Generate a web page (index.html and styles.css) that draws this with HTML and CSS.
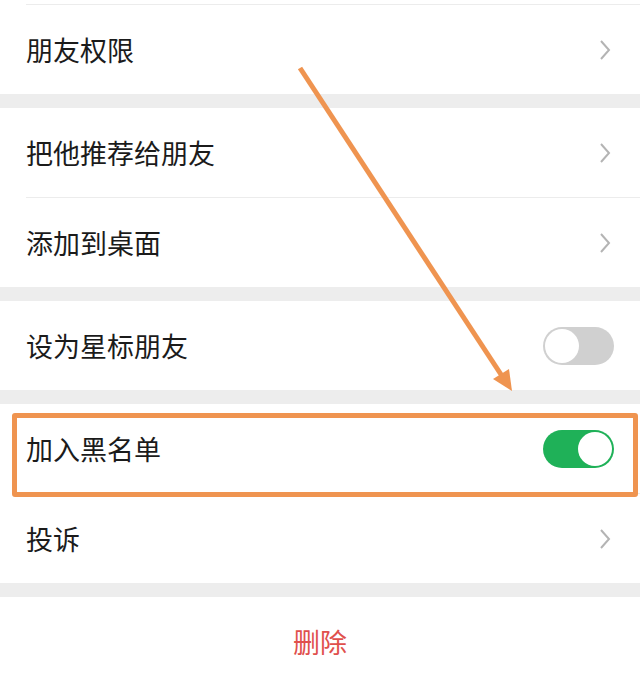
FILE: index.html
```html
<!DOCTYPE html>
<html>
<head>
	<meta charset="utf-8">
	<meta name="viewport" content="width=device-width, initial-scale=1">
	<title>资料设置</title>
	<link rel="stylesheet" href="styles.css">
</head>
<body>
<div class="page">
	<div class="group">
		<div class="stub"></div>
		<div class="cell">
			<span class="label">朋友权限</span>
			<svg class="arrow" width="12" height="22" viewBox="0 0 12 22"><path d="M2 2 L10 11 L2 20" fill="none" stroke="#b4b4b4" stroke-width="2"/></svg>
		</div>
	</div>

	<div class="group">
		<div class="cell">
			<span class="label">把他推荐给朋友</span>
			<svg class="arrow" width="12" height="22" viewBox="0 0 12 22"><path d="M2 2 L10 11 L2 20" fill="none" stroke="#b4b4b4" stroke-width="2"/></svg>
		</div>
		<div class="cell">
			<span class="label">添加到桌面</span>
			<svg class="arrow" width="12" height="22" viewBox="0 0 12 22"><path d="M2 2 L10 11 L2 20" fill="none" stroke="#b4b4b4" stroke-width="2"/></svg>
		</div>
	</div>

	<div class="group">
		<div class="cell">
			<span class="label">设为星标朋友</span>
			<span class="switch"></span>
		</div>
	</div>

	<div class="group">
		<div class="cell cell-marked">
			<span class="label">加入黑名单</span>
			<span class="switch switch-on"></span>
			<div class="mark"></div>
		</div>
		<div class="cell">
			<span class="label">投诉</span>
			<svg class="arrow" width="12" height="22" viewBox="0 0 12 22"><path d="M2 2 L10 11 L2 20" fill="none" stroke="#b4b4b4" stroke-width="2"/></svg>
		</div>
	</div>

	<div class="group">
		<div class="cell cell-danger">
			<span class="label">删除</span>
		</div>
	</div>

	<svg class="pointer" width="640" height="682" viewBox="0 0 640 682">
		<line x1="300" y1="68" x2="502" y2="376" stroke="#ef9450" stroke-width="5"/>
		<polygon points="512,391 493,379 509,369" fill="#ef9450"/>
	</svg>
</div>
</body>
</html>
```

FILE: styles.css
```css
body {
	margin: 0;
	background-color: #ededed;
	font-family: "Noto Sans CJK SC", "Noto Sans", sans-serif;
}

.page {
	position: relative;
	width: 640px;
	height: 682px;
	overflow: hidden;
}

.group {
	background-color: #ffffff;
	margin-bottom: 14px;
}

.stub {
	height: 4px;
}

.cell {
	position: relative;
	height: 89px;
	display: flex;
	align-items: center;
	justify-content: space-between;
	padding: 0 26px;
	font-size: 27px;
	color: #1b1b1b;
}

.stub + .cell,
.cell + .cell {
	margin-top: 1px;
}

.stub + .cell::before,
.cell + .cell::before {
	content: "";
	position: absolute;
	left: 26px;
	right: 0;
	top: -1px;
	height: 1px;
	background-color: #ececec;
}

.cell .arrow {
	margin-right: 3px;
}

.switch {
	position: relative;
	width: 71px;
	height: 38px;
	border-radius: 19px;
	background-color: #d0d0d0;
}

.switch::after {
	content: "";
	position: absolute;
	left: 2px;
	top: 2px;
	width: 34px;
	height: 34px;
	border-radius: 50%;
	background-color: #ffffff;
}

.switch-on {
	background-color: #1fb158;
}

.switch-on::after {
	left: 35px;
}

.mark {
	position: absolute;
	left: 12px;
	right: 2px;
	top: 9px;
	bottom: -4px;
	border: 5px solid #ef9450;
	border-radius: 3px;
	z-index: 2;
}

.cell-danger {
	height: 88px;
	justify-content: center;
	color: #e0504c;
	font-size: 27px;
}

.pointer {
	position: absolute;
	left: 0;
	top: 0;
	pointer-events: none;
}
```
